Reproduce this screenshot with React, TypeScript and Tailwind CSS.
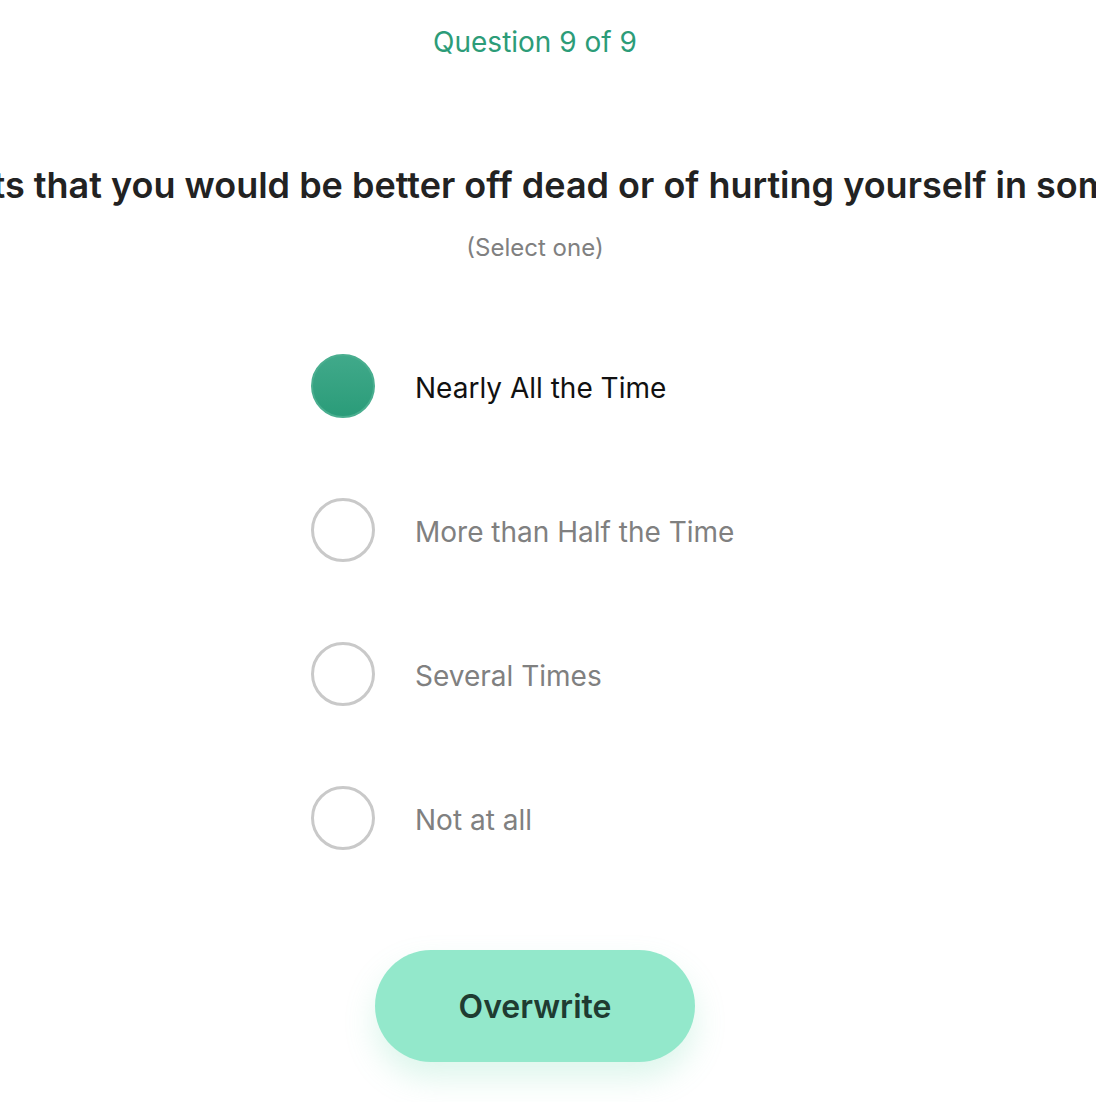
import React from 'react';

const options = [
  'Nearly All the Time',
  'More than Half the Time',
  'Several Times',
  'Not at all',
];

export default function App() {
  const [selected, setSelected] = React.useState(0);

  return (
    <div className="w-[1096px] h-[1102px] overflow-hidden bg-white" style={{ fontFamily: 'Inter, "Noto Sans", sans-serif' }}>
      <div className="w-[1070px] flex flex-col items-center">
        <p className="mt-[26px] text-[28px] leading-[32px] text-[#2c9c78]">Question 9 of 9</p>

        <div className="mt-[107px] w-full flex justify-center">
          <h1 className="shrink-0 whitespace-nowrap text-[36px] leading-[40px] font-semibold text-[#222222]">
            Thoughts that you would be better off dead or of hurting yourself in some way
          </h1>
        </div>

        <p className="mt-[29px] text-[24px] leading-[28px] text-[#808080]">(Select one)</p>

        <div className="mt-[92px] w-[448px] flex flex-col gap-20">
          {options.map((label, i) => (
            <button
              key={label}
              onClick={() => setSelected(i)}
              className="flex items-center gap-10 text-left"
            >
              {selected === i ? (
                <span className="w-16 h-16 rounded-full bg-gradient-to-b from-[#40a98a] to-[#2a9c79] border-2 border-[#4aae8f] shrink-0" />
              ) : (
                <span className="w-16 h-16 rounded-full border-[3px] border-[#c9c9c9] shrink-0" />
              )}
              <span className={selected === i ? 'mt-[4px] text-[28px] leading-[34px] text-[#111111]' : 'mt-[4px] text-[28px] leading-[34px] text-[#808080]'}>
                {label}
              </span>
            </button>
          ))}
        </div>

        <button className="mt-[100px] w-[320px] h-[112px] rounded-full bg-[#93e8cb] pt-[2px] text-[32px] font-semibold text-[#1f3b31] shadow-[0_16px_30px_rgba(120,220,180,0.25)]">
          Overwrite
        </button>
      </div>
    </div>
  );
}
